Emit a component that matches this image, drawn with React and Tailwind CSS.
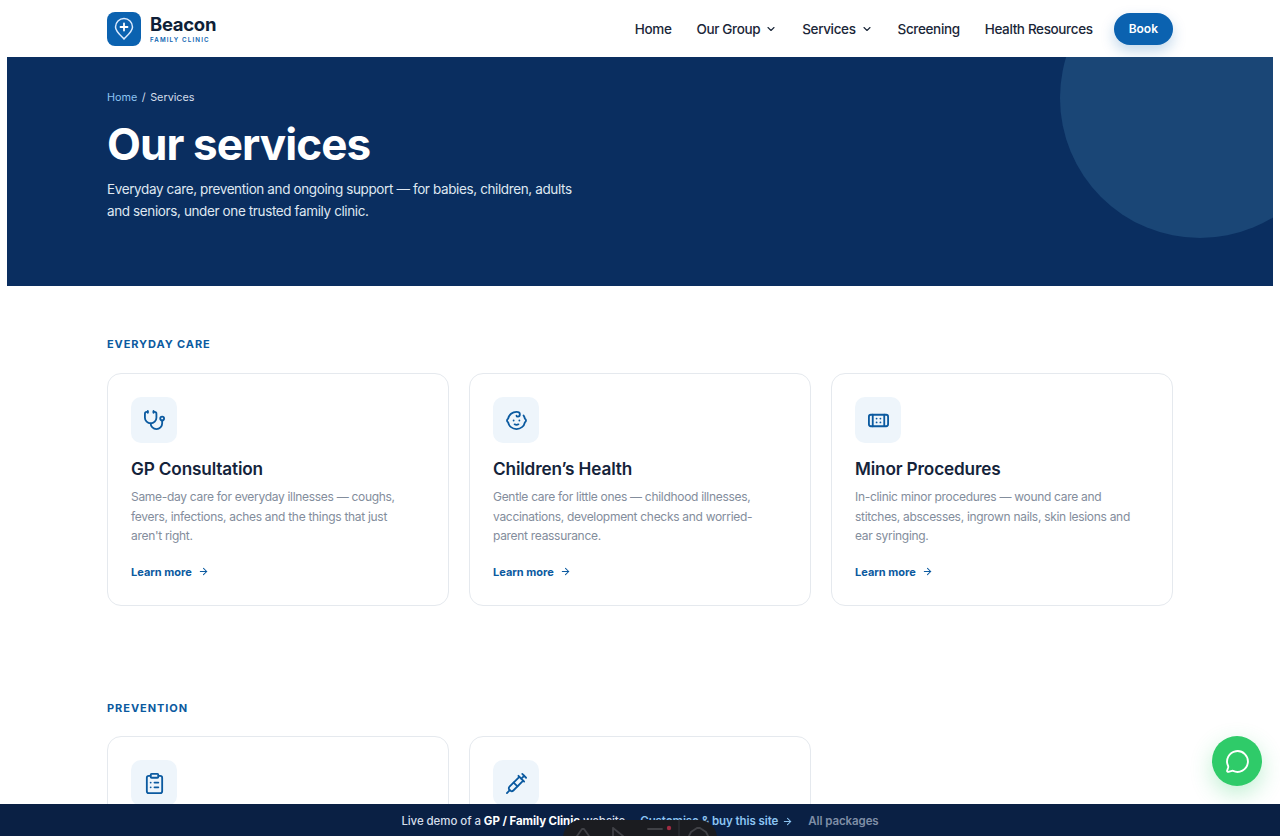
import { ArrowRight, Baby, Bandage, ChevronDown, ClipboardList, MessageCircle, Stethoscope, Syringe } from "lucide-react";

const font = { fontFamily: "Inter, 'Liberation Sans', sans-serif" };

function Logo() {
  return (
    <div className="flex items-center gap-[9px]">
      <div className="w-[34px] h-[34px] rounded-[8px] bg-[#0b62b0] flex items-center justify-center">
        <svg width="22" height="24" viewBox="0 0 22 24" fill="none" stroke="#dbeafe" strokeWidth="1.5" strokeLinecap="round" strokeLinejoin="round">
          <path d="M11 22c-1-1.600-8.500-7-8.500-12a8.500 8.500 0 0 1 17 0c0 5-7.500 10.400-8.500 12z" />
          <path d="M11 6.500v7M7.500 10h7" stroke="#ffffff" strokeWidth="1.800" />
        </svg>
      </div>
      <div className="flex flex-col">
        <span className="text-[18.500px] leading-[22px] font-bold tracking-[-0.3px] text-[#0f1f38]">Beacon</span>
        <span className="text-[6.200px] leading-[9px] font-semibold tracking-[1.150px] text-[#0b62b0]">FAMILY CLINIC</span>
      </div>
    </div>
  );
}

function NavItem({ label, caret }) {
  return (
    <a className="flex items-center text-[13.500px] font-medium text-[#1a2638] tracking-[-0.36px]">
      {label}
      {caret && <ChevronDown className="w-[12px] h-[12px] ml-[5px]" strokeWidth={2.200} />}
    </a>
  );
}

function ServiceCard({ icon: Icon, title, text }) {
  return (
    <div className="rounded-[14px] border border-[#e5e9ee] bg-white p-[23px] h-[233px]">
      <div className="w-[46px] h-[46px] rounded-[10px] bg-[#eef5fb] flex items-center justify-center">
        <Icon className="w-[23px] h-[23px] text-[#0b5aa0]" strokeWidth={1.900} />
      </div>
      {title && (
        <>
          <h3 className="mt-[14px] text-[17.200px] leading-[24px] font-semibold text-[#14233a] tracking-[-0.15px]">{title}</h3>
          <p className="mt-[6px] text-[12px] leading-[19.500px] text-[#838d9c] tracking-[-0.3px] whitespace-pre-line">{text}</p>
          <a className="mt-[18px] flex items-center gap-[6px] text-[11px] font-bold text-[#0b5aa0]">
            Learn more
            <ArrowRight className="w-[11px] h-[11px]" strokeWidth={2.200} />
          </a>
        </>
      )}
    </div>
  );
}

function ToolbarPeek() {
  return (
    <div className="absolute left-[563px] top-[820px] w-[154px] h-[40px] rounded-t-[18px] bg-[#1b1c20]">
      <svg className="absolute left-0 top-0" width="154" height="16" viewBox="0 0 154 16" fill="none" stroke="#404146" strokeWidth="1.800" strokeLinecap="round" strokeLinejoin="round">
        <path d="M14 16l5-7h2l5 7" />
        <path d="M50 8l10 8M50 8v8" />
        <path d="M85 9h14" />
        <circle cx="106" cy="8" r="2.200" fill="#a02c42" stroke="none" />
        <path d="M116 0v16" stroke="#33343a" strokeWidth="1" />
        <path d="M126 16l2-4 3-2 3-2h3l3 2 3 2 2 4" />
      </svg>
    </div>
  );
}

export default function App() {
  return (
    <div className="h-screen overflow-hidden bg-white relative" style={font}>
      <div className="mx-[7px]">
        {/* Header */}
        <header className="h-[57px] bg-white pl-[100px] pr-[100px] flex items-center justify-between">
          <Logo />
          <nav className="flex items-center gap-[25px] pt-[1px]">
            <NavItem label="Home" />
            <NavItem label="Our Group" caret />
            <NavItem label="Services" caret />
            <NavItem label="Screening" />
            <NavItem label="Health Resources" />
            <a className="-ml-[4px] -mt-[1px] h-[32px] px-[15px] rounded-full bg-[#0b62b0] text-white text-[12px] font-semibold flex items-center shadow-[0_6px_14px_rgba(11,98,176,0.25)]">
              Book
            </a>
          </nav>
        </header>

        {/* Hero */}
        <section className="relative h-[229px] bg-[#0a2e60] overflow-hidden pl-[100px] pt-[34px]">
          <div className="absolute left-[1053px] -top-[99px] w-[280px] h-[280px] rounded-full bg-[#1a4676]" />
          <div className="relative text-[10.800px] leading-[14px] text-[#d5deea]">
            <span className="text-[#8cc4f2]">Home</span>
            <span className="mx-[4.500px]">/</span>
            <span>Services</span>
          </div>
          <h1 className="relative mt-[11px] text-[44px] leading-[56px] font-bold tracking-[-0.9px] text-white">Our services</h1>
          <p className="relative mt-[6px] text-[13.500px] leading-[22px] text-[#dfe7f1] tracking-[-0.38px]">
            Everyday care, prevention and ongoing support — for babies, children, adults
            <br />
            and seniors, under one trusted family clinic.
          </p>
        </section>

        <main className="px-[100px]">
          {/* Everyday care */}
          <h2 className="mt-[51px] text-[11px] leading-[14px] font-bold tracking-[0.9px] text-[#0b5aa0]">EVERYDAY CARE</h2>
          <div className="mt-[22px] grid grid-cols-3 gap-[20px]">
            <ServiceCard
              icon={Stethoscope}
              title="GP Consultation"
              text={"Same-day care for everyday illnesses — coughs,\nfevers, infections, aches and the things that just\naren't right."}
            />
            <ServiceCard
              icon={Baby}
              title="Children’s Health"
              text={"Gentle care for little ones — childhood illnesses,\nvaccinations, development checks and worried-\nparent reassurance."}
            />
            <ServiceCard
              icon={Bandage}
              title="Minor Procedures"
              text={"In-clinic minor procedures — wound care and\nstitches, abscesses, ingrown nails, skin lesions and\near syringing."}
            />
          </div>

          {/* Prevention */}
          <h2 className="mt-[95px] text-[11px] leading-[14px] font-bold tracking-[0.95px] text-[#0b5aa0]">PREVENTION</h2>
          <div className="mt-[21px] grid grid-cols-3 gap-[20px]">
            <ServiceCard icon={ClipboardList} />
            <ServiceCard icon={Syringe} />
          </div>
        </main>
      </div>

      {/* Chat button */}
      <div className="absolute right-[18px] bottom-[50px] w-[50px] h-[50px] rounded-full bg-[#2fcb69] flex items-center justify-center shadow-[0_8px_22px_rgba(47,203,105,0.3)]">
        <MessageCircle className="w-[25px] h-[25px] text-white" strokeWidth={1.800} />
      </div>

      {/* Demo bar */}
      <div className="absolute left-0 right-0 bottom-0 h-[32px] pt-[3px] bg-[#0a2044] flex items-center justify-center text-[11.500px] font-medium tracking-[-0.08px]">
        <span className="text-[#d5deea]">
          Live demo of a <b className="text-white font-bold">GP / Family Clinic</b> website
        </span>
        <a className="ml-[15px] font-semibold text-[#8cc4f2] flex items-center gap-[4px]">
          Customise &amp; buy this site
          <ArrowRight className="w-[11px] h-[11px]" strokeWidth={2.200} />
        </a>
        <a className="ml-[15px] font-semibold text-[#7f8ea6]">All packages</a>
      </div>

      <ToolbarPeek />
    </div>
  );
}
